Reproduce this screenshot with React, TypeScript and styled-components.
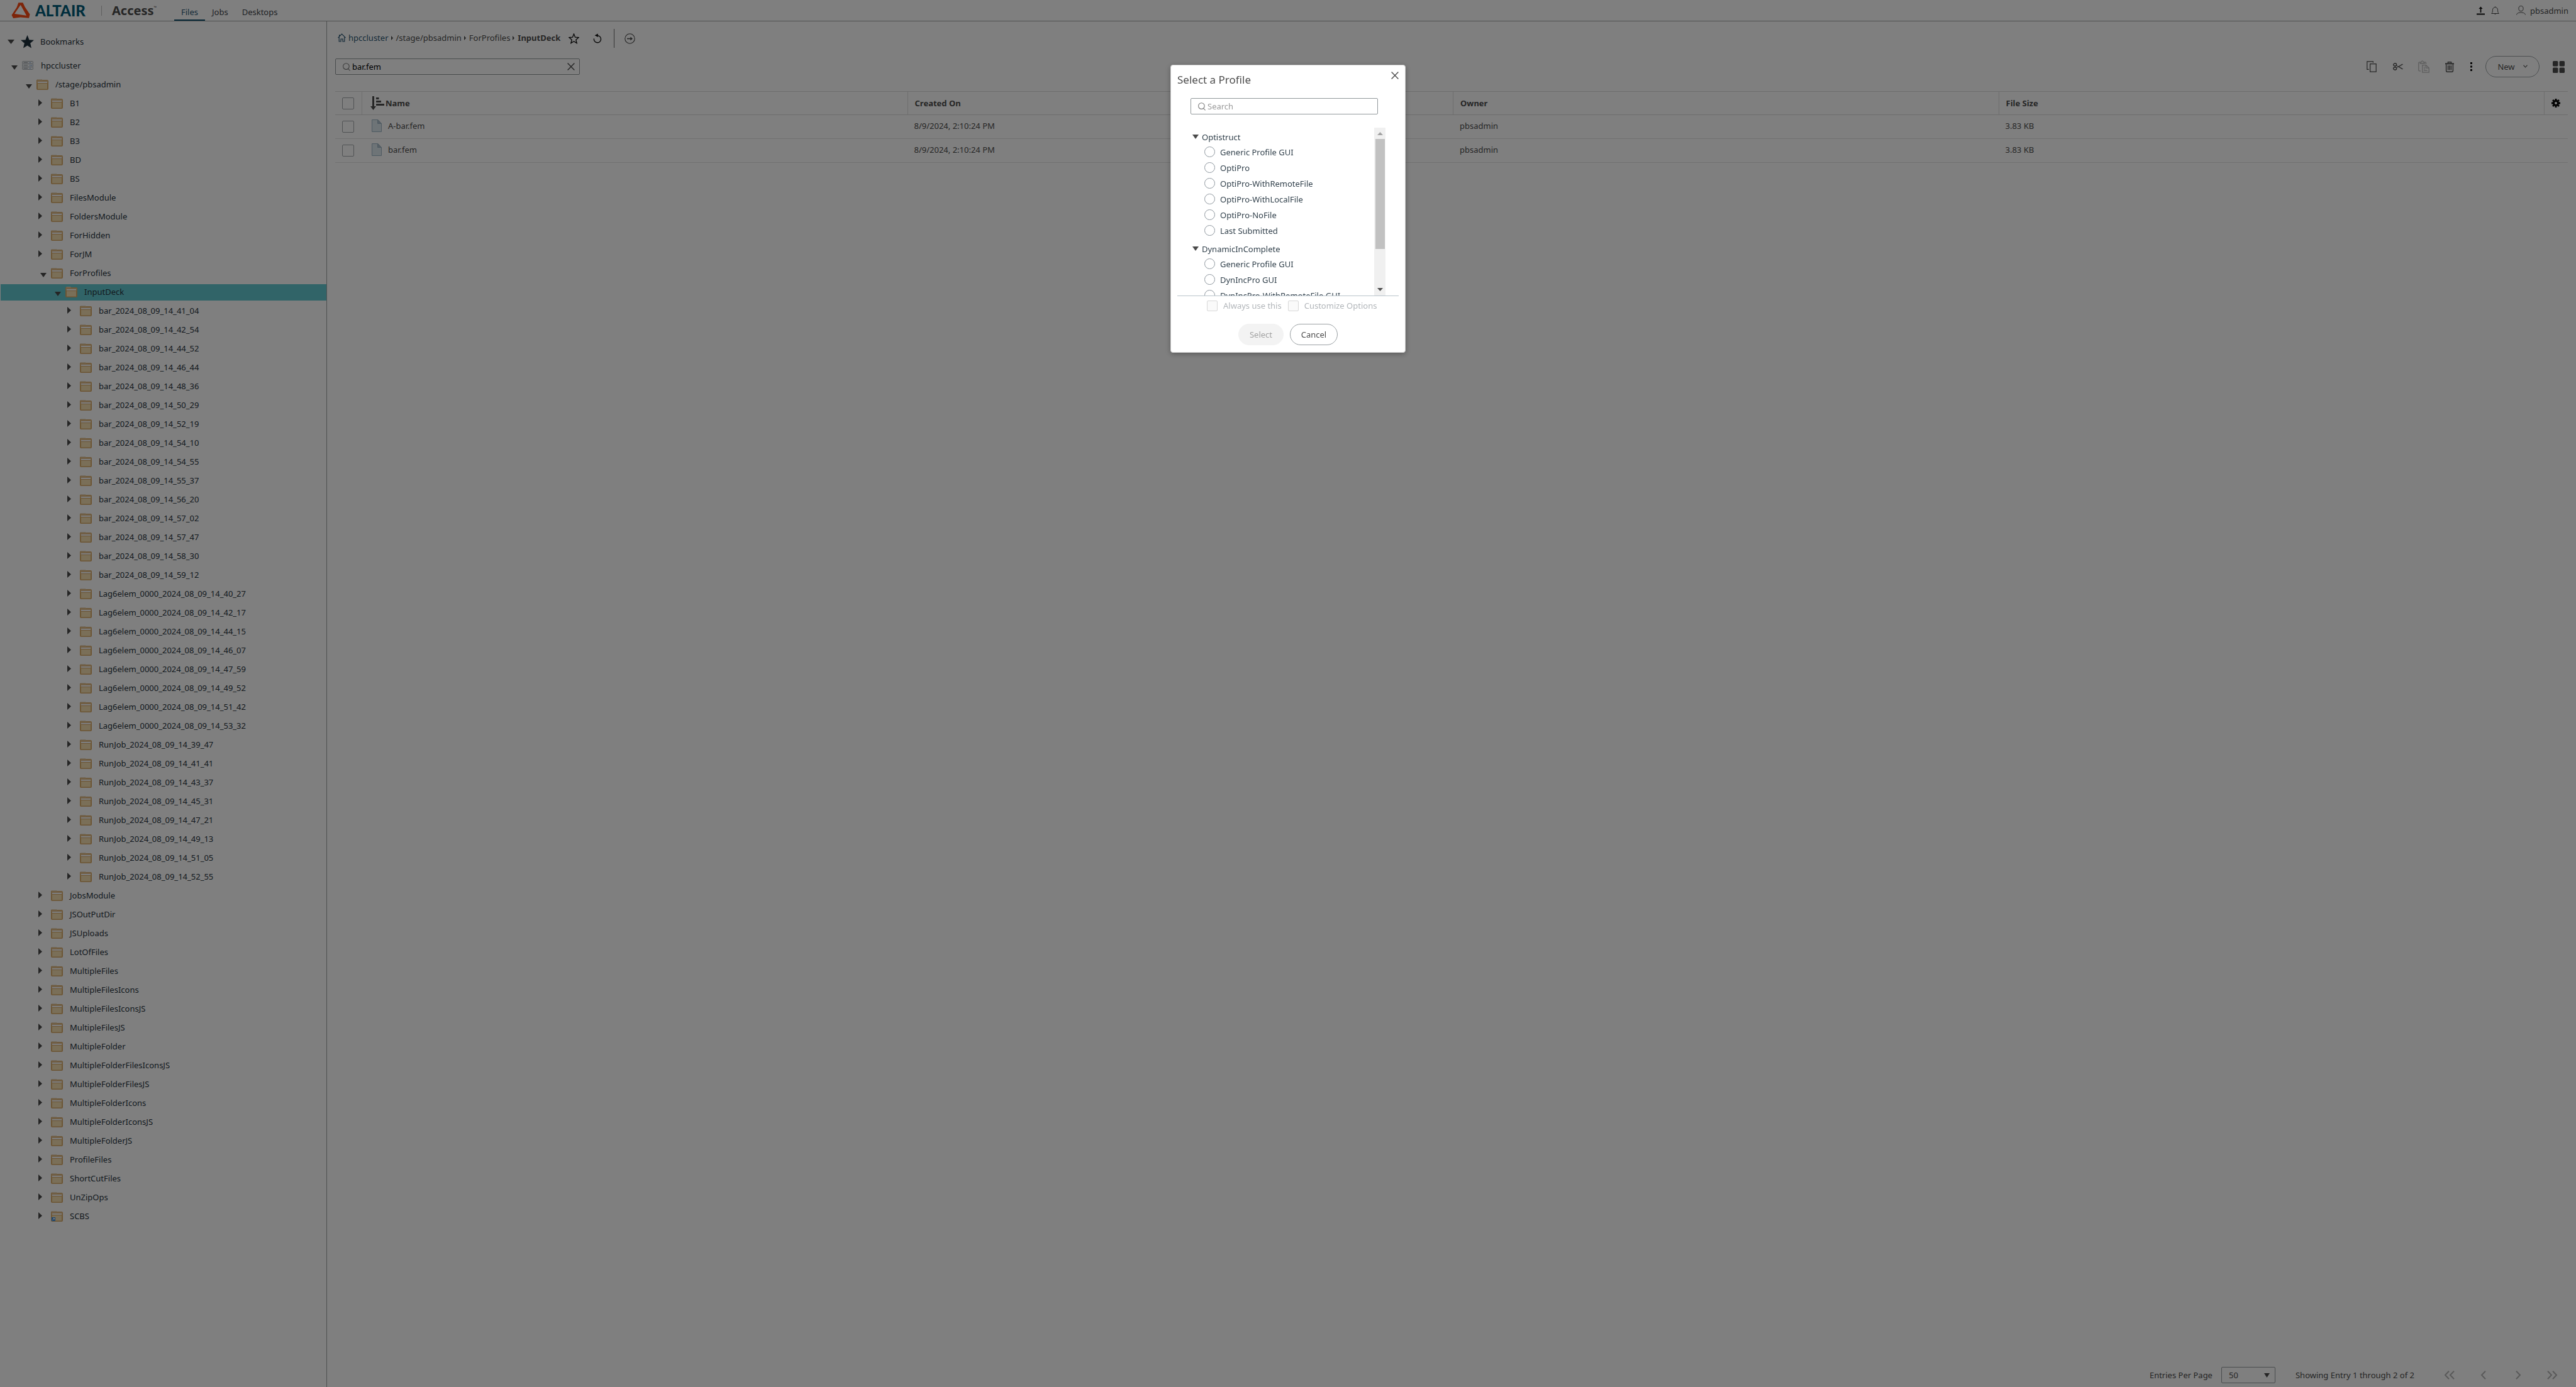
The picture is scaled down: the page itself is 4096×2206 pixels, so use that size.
import React from "react";
import styled, { createGlobalStyle, css } from "styled-components";

const GlobalStyle = createGlobalStyle`
  *, *::before, *::after { box-sizing: border-box; }
  html, body { margin: 0; padding: 0; background: #fff; }
  body {
    font-family: "Noto Sans", "Open Sans", sans-serif;
    font-size: 13px;
    line-height: 20px;
    color: #4d4d4d;
  }
  button, input, select { font: inherit; color: inherit; margin: 0; }
  button { cursor: pointer; }
  a { color: inherit; text-decoration: none; }
  ul, ol { list-style: none; margin: 0; padding: 0; }
  svg { display: block; flex: none; }
`;

/* ---------- layout ---------- */

const Page = styled.div`
  min-height: 100vh;
  display: flex;
  flex-direction: column;
`;

const Header = styled.header`
  height: 34px;
  flex: none;
  display: flex;
  align-items: stretch;
  padding: 0 12px 0 18px;
  border-bottom: 1px solid #9fa2a3;
`;

const Body = styled.div`
  flex: 1;
  display: flex;
  align-items: stretch;
`;

const Sidebar = styled.aside`
  width: 520px;
  flex: none;
  padding: 17px 0 20px 1px;
  border-right: 1px solid #9fa2a3;
  color: #27333d;
`;

const Main = styled.main`
  flex: 1;
  min-width: 0;
  display: flex;
  flex-direction: column;
  padding: 12px 13px 6px;
`;

/* ---------- header ---------- */

const Brand = styled.div`
  display: flex;
  align-items: center;
  width: 259px;
`;

const BrandName = styled.span`
  margin-left: 8px;
  width: 97px;
  font: 900 24px/32px Lato, sans-serif;
  color: #005b78;
`;

const BrandRule = styled.span`
  width: 1px;
  height: 16px;
  margin: 0 16px 0 8px;
  background: #bdbdbd;
`;

const ProductName = styled.span`
  display: flex;
  font-weight: 700;
  font-size: 20px;
  line-height: 32px;
  sup { font-size: 6px; line-height: 22px; font-weight: 400; }
`;

const Tabs = styled.nav`
  display: flex;
`;

const Tab = styled.a<{ $active?: boolean }>`
  padding: 6px 11px 0;
  line-height: 26px;
  color: ${(p) => (p.$active ? "#2b5672" : "#3c4248")};
  border-bottom: 2px solid ${(p) => (p.$active ? "#10506e" : "transparent")};
`;

const HeaderTools = styled.div`
  margin-left: auto;
  display: flex;
  align-items: center;
  gap: 10px;
`;

const IconButton = styled.button<{ $w?: number; $h?: number }>`
  display: flex;
  align-items: center;
  justify-content: center;
  flex: none;
  width: ${(p) => (p.$w ? `${p.$w}px` : "auto")};
  height: ${(p) => (p.$h ? `${p.$h}px` : "auto")};
  padding: 0;
  border: 0;
  background: none;
  color: #4d4d4d;
`;

const UserButton = styled(IconButton)`
  gap: 7px;
  margin-left: 17px;
`;

/* ---------- tree ---------- */

const BookmarkRow = styled.div`
  display: flex;
  align-items: center;
  gap: 10px;
  height: 30px;
  margin-bottom: 8px;
  padding-left: 11px;
`;

const TreeRow = styled.div<{ $depth: number; $selected?: boolean }>`
  display: flex;
  align-items: center;
  height: 30px;
  padding-left: ${(p) => p.$depth * 23 + 14}px;
  line-height: 30px;
  ${(p) =>
    p.$selected &&
    css`
      background: #62c8d0;
      box-shadow: inset 0 3px #fff, inset 0 -1px #fff;
    `}
`;

const TreeToggle = styled.button<{ $open?: boolean }>`
  width: 20px;
  height: 20px;
  flex: none;
  display: flex;
  align-items: center;
  padding: ${(p) => (p.$open ? "6px 0 0 3px" : "0 0 2px 0")};
  border: 0;
  background: none;
`;

const TreeIcon = styled.span`
  width: 20px;
  margin-right: 10px;
  flex: none;
`;

/* ---------- toolbar ---------- */

const BreadcrumbBar = styled.div`
  display: flex;
  align-items: center;
  height: 30px;
  padding-left: 4px;
`;

const Crumbs = styled.ol`
  display: flex;
  align-items: center;
  height: 30px;
  padding-bottom: 2px;
`;

const Crumb = styled.li<{ $current?: boolean }>`
  display: flex;
  align-items: center;
  gap: 4px;
  padding-right: 5px;
  font-weight: ${(p) => (p.$current ? 700 : 400)};
  &:first-child { color: #2b5672; }
`;

const Divider = styled.span`
  width: 1px;
  height: 30px;
  margin: 0 16px 0 4px;
  background: #6a6a6a;
`;

const ToolRow = styled.div`
  display: flex;
  align-items: center;
  justify-content: space-between;
  height: 34px;
  margin: 13px 0 22px;
`;

const SearchBox = styled.div<{ $w: string }>`
  display: flex;
  align-items: center;
  gap: 3px;
  width: ${(p) => p.$w};
  height: 26px;
  padding: 0 7px 0 11px;
  border: 1px solid #92989b;
  border-radius: 2px;
`;

const SearchField = styled.input`
  flex: 1;
  min-width: 0;
  padding: 0;
  border: 0;
  outline: 0;
  background: none;
  color: #000;
  &::placeholder { color: #9a9a9a; opacity: 1; }
`;

const Tools = styled.div`
  display: flex;
  align-items: center;
  padding-right: 5px;
`;

const PillButton = styled.button<{ $w: number; $filled?: boolean }>`
  display: flex;
  align-items: center;
  justify-content: center;
  gap: 13px;
  width: ${(p) => p.$w}px;
  height: 34px;
  padding: 0 0 1px;
  border: 1px solid ${(p) => (p.$filled ? "#f3f3f3" : "#9aa0a3")};
  border-radius: 17px;
  background: ${(p) => (p.$filled ? "#f3f3f3" : "#fff")};
  color: ${(p) => (p.$filled ? "#a3a3a3" : "#4d4d4d")};
`;

const NewButton = styled(PillButton)`
  margin: 0 21px 0 10px;
`;

/* ---------- table ---------- */

const Table = styled.table`
  width: 100%;
  table-layout: fixed;
  border-collapse: separate;
  border-spacing: 0;
  text-align: left;
`;

const HeadCell = styled.th<{ $w?: number }>`
  width: ${(p) => (p.$w ? `${p.$w}px` : "auto")};
  height: 38px;
  padding: 0 11px;
  border-top: 1px solid #dcdcdc;
  border-bottom: 1px solid #dcdcdc;
  font-weight: 700;
  & + & { border-left: 1px solid #dcdcdc; }
`;

const Cell = styled.td`
  height: 38px;
  padding: 0 11px 4px;
  border-bottom: 1px solid #e2e2e2;
  &:first-child { padding: 0 11px; }
`;

const CellContent = styled.div`
  display: flex;
  align-items: center;
`;

const NameContent = styled(CellContent)`
  gap: 10px;
  padding-left: 5px;
`;

const SortContent = styled(CellContent)`
  gap: 2px;
  padding-left: 2px;
`;

const CheckBox = styled.input`
  appearance: none;
  display: block;
  flex: none;
  width: 19px;
  height: 19px;
  margin: 0;
  border: 1px solid #a0a5a8;
  border-radius: 2px;
  background: #fff;
  &:disabled { width: 17px; height: 17px; border-color: #d8d8d8; background: #fafafa; }
`;

/* ---------- footer ---------- */

const Footer = styled.footer`
  margin-top: auto;
  height: 26px;
  display: flex;
  align-items: center;
  justify-content: flex-end;
  line-height: 24px;
`;

const PageSizeLabel = styled.label`
  margin-right: 14px;
`;

const SelectWrap = styled.span`
  display: flex;
  align-items: center;
  width: 86px;
  height: 26px;
  margin-right: 32px;
  padding-right: 8px;
  border: 1px solid #92989b;
  border-radius: 2px;
`;

const PageSize = styled.select`
  appearance: none;
  flex: 1;
  height: 24px;
  padding: 0 0 0 11px;
  border: 0;
  outline: 0;
  background: none;
`;

const Pager = styled.div`
  display: flex;
  margin-left: 28px;
`;

/* ---------- dialog ---------- */

const Backdrop = styled.div`
  position: fixed;
  inset: 0;
  display: flex;
  justify-content: center;
  align-items: flex-start;
  padding-top: 103px;
  background: rgba(0, 0, 0, 0.5);
`;

const Dialog = styled.div`
  width: 374px;
  padding: 0 10px 11px;
  display: flex;
  flex-direction: column;
  border: 1px solid #d0d0d0;
  border-radius: 4px;
  background: #fff;
  box-shadow: 0 2px 8px rgba(0, 0, 0, 0.3);
`;

const DialogHead = styled.div`
  display: flex;
  justify-content: space-between;
  height: 52px;
  padding-top: 8px;
`;

const DialogTitle = styled.h2`
  margin: 0;
  font-size: 17px;
  line-height: 30px;
  font-weight: 400;
`;

const DialogBody = styled.div`
  padding: 0 21px;
`;

const ProfilePane = styled.div`
  display: flex;
  height: 268px;
  margin-top: 21px;
  padding: 0 21px;
  border-bottom: 1px solid #b9c3cb;
`;

const ProfileList = styled.div`
  flex: 1;
  overflow-y: auto;
  scrollbar-width: none;
  color: #33424d;
`;

const Group = styled.section`
  padding-top: 5px;
  & + & { padding-top: 7px; }
`;

const GroupHead = styled.button`
  display: flex;
  align-items: center;
  gap: 5px;
  height: 21px;
  padding: 0 0 2px 3px;
  border: 0;
  background: none;
`;

const Option = styled.label`
  display: flex;
  align-items: center;
  gap: 8px;
  height: 25px;
  padding-left: 22px;
`;

const Radio = styled.input`
  appearance: none;
  flex: none;
  width: 17px;
  height: 17px;
  margin: 0;
  border: 1px solid #8f989f;
  border-radius: 50%;
  background: #fff;
`;

const ScrollTrack = styled.div`
  width: 18px;
  flex: none;
  display: flex;
  flex-direction: column;
  align-items: center;
  justify-content: space-between;
  padding: 7px 0;
  background: #f0f0f0;
`;

const ScrollThumb = styled.div`
  width: 15px;
  height: 175px;
  margin-bottom: 56px;
  background: #c1c1c1;
`;

const Choices = styled.div`
  display: flex;
  padding: 6px 0 0 47px;
  gap: 10px;
`;

const Choice = styled.label`
  display: flex;
  align-items: center;
  gap: 9px;
  height: 18px;
  color: #b2b6ba;
`;

const Actions = styled.div`
  display: flex;
  justify-content: center;
  gap: 10px;
  margin-top: 20px;
`;

/* ---------- icons ---------- */

const LogoMark = () => (
  <svg width="30" height="25" viewBox="34 14 102 88" aria-hidden="true">
    <path
      fill="#fb4a14"
      fillRule="evenodd"
      d="M72 15H97L108 39L136 80L131 101L84 97L43 102L34 84L63 40ZM84 27L50 77L117 87Z"
    />
  </svg>
);

const TriDown = ({ w = 10, color = "#4a4a4a" }: { w?: number; color?: string }) => (
  <svg width={w} height="7" viewBox="0 0 10 7" preserveAspectRatio="none" aria-hidden="true">
    <path d="M0 0H10L5 7Z" fill={color} />
  </svg>
);

const TriRight = ({ w = 6, h = 11 }: { w?: number; h?: number }) => (
  <svg width={w} height={h} viewBox="0 0 6 11" preserveAspectRatio="none" aria-hidden="true">
    <path d="M0 0L6 5.5L0 11Z" fill="#4a4a4a" />
  </svg>
);

const FolderIcon = ({ link }: { link?: boolean }) => (
  <svg width="19" height="17" viewBox="0 0 19 17" aria-hidden="true">
    <path d="M.5 15.5V2Q.5 .8 1.5 .8H8.5L9.5 1.6H17.5Q18.5 1.6 18.5 2.6V15.5Q18.5 16.5 17.5 16.5H1.5Q.5 16.5 .5 15.5Z" fill="#e2bf8c" stroke="#d8aa68" />
    <path d="M1.5 .5H8.5" stroke="#eadfca" />
    <path d="M2 4H17V6H2Z" fill="#fdfdfd" />
    <path d="M1.5 6.5H17.5V16H1.5Z" fill="#f5dfb0" stroke="#d8aa68" />
    {link && (
      <>
        <path d="M1 10H7V16H1Z" fill="#3f8fe0" />
        <path d="M2.5 14.5L5 12M3.5 11.5H5.5V13.5" stroke="#fff" fill="none" />
      </>
    )}
  </svg>
);

const ServerIcon = () => (
  <svg width="18" height="14" viewBox="0 0 18 14" fill="#f1f3f4" stroke="#aab2b6" aria-hidden="true">
    <rect x=".5" y=".5" width="17" height="4" rx="1" />
    <rect x=".5" y="4.5" width="17" height="5" rx="1" />
    <rect x=".5" y="9.5" width="17" height="4" rx="1" />
    <path d="M2.5 2.5H9M2.5 7H9M2.5 11.5H9" stroke="#8f979b" />
    <path d="M12 2.5H13.5M12 7H13.5M12 11.5H13.5M14.5 7H16" stroke="#5b8fd0" />
  </svg>
);

const StarIcon = ({ size, solid }: { size: number; solid?: boolean }) => (
  <svg width={size} height={size} viewBox="0 0 20 20" aria-hidden="true">
    <path
      d="M10 1.2L12.4 7.3L18.8 7.8L13.9 12L15.4 18.4L10 15L4.6 18.4L6.1 12L1.2 7.8L7.6 7.3Z"
      fill={solid ? "#1c2f3b" : "none"}
      stroke={solid ? "#1c2f3b" : "#111"}
      strokeWidth={solid ? 1 : 1.6}
    />
  </svg>
);

const HomeIcon = () => (
  <svg width="13" height="14" viewBox="0 0 13 14" fill="none" stroke="#2b5672" strokeWidth="1.2" aria-hidden="true">
    <path d="M.5 7.2L6.5 1L12.5 7.2M2.2 6V13H5V9H8V13H10.8V6M2.6 4.6V2" />
  </svg>
);

const RefreshIcon = () => (
  <svg width="14" height="16" viewBox="0 0 14 16" aria-hidden="true">
    <path d="M7 3.6A5.6 5.6 0 1 1 1.4 8.4" fill="none" stroke="#111" strokeWidth="1.4" />
    <path d="M2.6 3.2L7.8 .4V6Z" fill="#111" />
  </svg>
);

const GoIcon = () => (
  <svg width="17" height="17" viewBox="0 0 17 17" fill="none" stroke="#4d4d4d" aria-hidden="true">
    <circle cx="8.5" cy="8.5" r="7.7" strokeWidth="1.1" />
    <path d="M4 8.5H10.5" strokeWidth="1.6" />
    <path d="M9.4 5.6L13 8.5L9.4 11.4Z" fill="#4d4d4d" stroke="none" />
  </svg>
);

const SearchIcon = () => (
  <svg width="12" height="13" viewBox="0 0 12 13" fill="none" stroke="#7a7a7a" strokeWidth="1.1" aria-hidden="true">
    <circle cx="5.4" cy="5.6" r="4.8" />
    <path d="M8.2 9.2L11.6 12.4" />
  </svg>
);

const CloseIcon = () => (
  <svg width="12" height="12" viewBox="0 0 12 12" stroke="#4d4d4d" strokeWidth="1.4" aria-hidden="true">
    <path d="M.6 .6L11.4 11.4M11.4 .6L.6 11.4" />
  </svg>
);

const UploadIcon = () => (
  <svg width="13" height="14" viewBox="0 0 13 14" fill="#111" aria-hidden="true">
    <path d="M0 11.5H13V13.5H0ZM5.6 10V4H3.4L6.5 .4L9.6 4H7.4V10Z" />
  </svg>
);

const BellIcon = () => (
  <svg width="13" height="14" viewBox="0 0 13 14" fill="none" stroke="#4d4d4d" aria-hidden="true">
    <path d="M.7 11.5C2.2 10 2.3 8.8 2.4 6.2C2.5 3.3 4 1.6 6.5 1.6S10.5 3.3 10.6 6.2C10.7 8.8 10.8 10 12.3 11.5ZM5.8 11.8L6.5 13L7.2 11.8M6.5 1.4V.3" />
  </svg>
);

const UserIcon = () => (
  <svg width="15" height="15" viewBox="0 0 15 15" fill="none" stroke="#4d4d4d" aria-hidden="true">
    <ellipse cx="7.5" cy="4.6" rx="3.6" ry="4.1" />
    <path d="M.6 14.5C.8 12 3.8 10.9 7.5 10.9S14.2 12 14.4 14.5" />
  </svg>
);

const CopyIcon = () => (
  <svg width="16" height="18" viewBox="0 0 16 18" fill="none" stroke="#4d4d4d" strokeWidth="1.2" aria-hidden="true">
    <path d="M3.6 13.4H.8V.8H10.4V2.8M5.6 4.6H15.2V17.2H5.6Z" />
  </svg>
);

const CutIcon = () => (
  <svg width="16" height="12" viewBox="0 0 16 12" fill="none" stroke="#4d4d4d" aria-hidden="true">
    <ellipse cx="3.2" cy="2.9" rx="2.5" ry="2.1" strokeWidth="1.4" />
    <ellipse cx="3.2" cy="9.1" rx="2.5" ry="2.1" strokeWidth="1.4" />
    <path d="M5.4 4L14 9.6Q15.6 10.4 15.4 9.4L8.4 5.6M5.4 8L14 2.4Q15.6 1.6 15.4 2.6L8.4 6.4" strokeWidth=".9" />
  </svg>
);

const PasteIcon = () => (
  <svg width="18" height="20" viewBox="0 0 18 20" fill="none" stroke="#bcbcbc" strokeWidth="1.3" aria-hidden="true">
    <path d="M4 16.8H2Q.8 16.8 .8 15.6V4Q.8 2.8 2 2.8H3.4M10 2.8H11.2Q12.4 2.8 12.4 4V6M3.4 5V2.8H5Q5.2 .8 6.7 .8T8.4 2.8H10V5Z" />
    <path d="M6.8 7.6H12.6L17.2 12V19.2H6.8ZM12.4 7.8V12.2H17M9 11H10.6M9 13.6H11M9 16.2H14.6" />
  </svg>
);

const TrashIcon = () => (
  <svg width="14" height="17" viewBox="0 0 14 17" fill="none" stroke="#4d4d4d" strokeWidth="1.4" aria-hidden="true">
    <path d="M4.4 2.6V.8H9.6V2.6" />
    <path d="M0 3.4H14" strokeWidth="2" />
    <path d="M1.6 4.4V14.4Q1.6 16.2 3.2 16.2H10.8Q12.4 16.2 12.4 14.4V4.4M4.6 6V13.6M7 6V13.6M9.4 6V13.6" />
  </svg>
);

const DotsIcon = () => (
  <svg width="3" height="14" viewBox="0 0 3 14" fill="#111" aria-hidden="true">
    <path d="M0 0H3V3H0ZM0 5.5H3V8.5H0ZM0 11H3V14H0Z" />
  </svg>
);

const GridIcon = () => (
  <svg width="19" height="19" viewBox="0 0 19 19" fill="#4d4d4d" aria-hidden="true">
    <rect width="8.4" height="8.4" rx="1.6" />
    <rect x="10.6" width="8.4" height="8.4" rx="1.6" />
    <rect y="10.6" width="8.4" height="8.4" rx="1.6" />
    <rect x="10.6" y="10.6" width="8.4" height="8.4" rx="1.6" />
  </svg>
);

const GearIcon = () => (
  <svg width="14" height="14" viewBox="0 0 14 14" aria-hidden="true">
    <circle cx="7" cy="7" r="3.5" fill="none" stroke="#050505" strokeWidth="3" />
    {[0, 45, 90, 135].map((a) => (
      <path key={a} d="M5.6 0H8.4V2.8H5.6ZM5.6 11.2H8.4V14H5.6Z" fill="#050505" transform={`rotate(${a} 7 7)`} />
    ))}
  </svg>
);

const SortIcon = () => (
  <svg width="22" height="22" viewBox="0 0 22 22" fill="#4d4d4d" aria-hidden="true">
    <path d="M3 0H6V16H9L4.5 22L0 16H3ZM9 2H13.5V5H9ZM9 7H17V10H9ZM9 12H22V15H9Z" />
  </svg>
);

const FileIcon = () => (
  <svg width="16" height="20" viewBox="0 0 16 20" aria-hidden="true">
    <path d="M.5 .5H10L15.5 6.5V19.5H.5Z" fill="#dde8ef" stroke="#9db4c4" />
    <path d="M9.5 .5L15.5 6.5H9.5Z" fill="#aebfcb" stroke="#9db4c4" />
  </svg>
);

const ChevronDown = () => (
  <svg width="7" height="5" viewBox="0 0 7 5" fill="none" stroke="#4d4d4d" strokeWidth="1.1" aria-hidden="true">
    <path d="M.5 .7L3.5 4L6.5 .7" />
  </svg>
);

const PageArrow = ({ dir, double }: { dir: "left" | "right"; double?: boolean }) => (
  <svg width={double ? 17 : 9} height="14" viewBox={double ? "0 0 17 14" : "0 0 9 14"} fill="none" stroke="#b4b4b4" strokeWidth="2" aria-hidden="true">
    {dir === "left" ? (
      <path d={double ? "M8 .8L2 7L8 13.2M16 .8L10 7L16 13.2" : "M8 .8L2 7L8 13.2"} />
    ) : (
      <path d={double ? "M1 .8L7 7L1 13.2M9 .8L15 7L9 13.2" : "M1 .8L7 7L1 13.2"} />
    )}
  </svg>
);

const ScrollArrow = ({ up }: { up?: boolean }) => (
  <svg width="9" height="5" viewBox="0 0 9 5" aria-hidden="true">
    <path d={up ? "M0 5L4.5 0L9 5Z" : "M0 0L4.5 5L9 0Z"} fill={up ? "#a3a3a3" : "#505050"} />
  </svg>
);

/* ---------- data ---------- */

type Node = { name: string; depth: number; open?: boolean; selected?: boolean; server?: boolean; link?: boolean };

const at = (depth: number, names: string[]): Node[] => names.map((name) => ({ name, depth }));

const stamped = (prefix: string, times: string[]) => times.map((t) => `${prefix}_2024_08_09_14_${t}`);

const tree: Node[] = [
  { name: "hpccluster", depth: 0, open: true, server: true },
  { name: "/stage/pbsadmin", depth: 1, open: true },
  ...at(2, ["B1", "B2", "B3", "BD", "BS", "FilesModule", "FoldersModule", "ForHidden", "ForJM"]),
  { name: "ForProfiles", depth: 2, open: true },
  { name: "InputDeck", depth: 3, open: true, selected: true },
  ...at(4, [
    ...stamped("bar", [
      "41_04", "42_54", "44_52", "46_44", "48_36", "50_29", "52_19", "54_10",
      "54_55", "55_37", "56_20", "57_02", "57_47", "58_30", "59_12",
    ]),
    ...stamped("Lag6elem_0000", ["40_27", "42_17", "44_15", "46_07", "47_59", "49_52", "51_42", "53_32"]),
    ...stamped("RunJob", ["39_47", "41_41", "43_37", "45_31", "47_21", "49_13", "51_05", "52_55"]),
  ]),
  ...at(2, [
    "JobsModule", "JSOutPutDir", "JSUploads", "LotOfFiles", "MultipleFiles", "MultipleFilesIcons",
    "MultipleFilesIconsJS", "MultipleFilesJS", "MultipleFolder", "MultipleFolderFilesIconsJS",
    "MultipleFolderFilesJS", "MultipleFolderIcons", "MultipleFolderIconsJS", "MultipleFolderJS",
    "ProfileFiles", "ShortCutFiles", "UnZipOps",
  ]),
  { name: "SCBS", depth: 2, link: true },
];

const files = [
  { name: "A-bar.fem", created: "8/9/2024, 2:10:24 PM", owner: "pbsadmin", size: "3.83 KB" },
  { name: "bar.fem", created: "8/9/2024, 2:10:24 PM", owner: "pbsadmin", size: "3.83 KB" },
];

const profiles = [
  {
    name: "Optistruct",
    options: ["Generic Profile GUI", "OptiPro", "OptiPro-WithRemoteFile", "OptiPro-WithLocalFile", "OptiPro-NoFile", "Last Submitted"],
  },
  { name: "DynamicInComplete", options: ["Generic Profile GUI", "DynIncPro GUI", "DynIncPro-WithRemoteFile GUI"] },
];

/* ---------- page ---------- */

const FileTree = () => (
  <Sidebar>
    <BookmarkRow>
      <TriDown w={11} />
      <StarIcon size={21} solid />
      <span>Bookmarks</span>
    </BookmarkRow>
    <ul>
      {tree.map((n, i) => (
        <li key={i}>
          <TreeRow $depth={n.depth} $selected={n.selected}>
            <TreeToggle $open={n.open} aria-label={n.name} aria-expanded={!!n.open}>
              {n.open ? <TriDown /> : <TriRight />}
            </TreeToggle>
            <TreeIcon>{n.server ? <ServerIcon /> : <FolderIcon link={n.link} />}</TreeIcon>
            {n.name}
          </TreeRow>
        </li>
      ))}
    </ul>
  </Sidebar>
);

const ProfileDialog = () => (
  <Backdrop>
    <Dialog role="dialog" aria-labelledby="dialog-title">
      <DialogHead>
        <DialogTitle id="dialog-title">Select a Profile</DialogTitle>
        <IconButton $w={12} $h={16} aria-label="Close">
          <CloseIcon />
        </IconButton>
      </DialogHead>
      <DialogBody>
        <SearchBox $w="298px">
          <SearchIcon />
          <SearchField placeholder="Search" aria-label="Search profiles" />
        </SearchBox>
      </DialogBody>
      <ProfilePane>
        <ProfileList>
          {profiles.map((g) => (
            <Group key={g.name}>
              <GroupHead>
                <TriDown />
                {g.name}
              </GroupHead>
              {g.options.map((o) => (
                <Option key={o}>
                  <Radio type="radio" name="profile" />
                  {o}
                </Option>
              ))}
            </Group>
          ))}
        </ProfileList>
        <ScrollTrack>
          <ScrollArrow up />
          <ScrollThumb />
          <ScrollArrow />
        </ScrollTrack>
      </ProfilePane>
      <Choices>
        <Choice>
          <CheckBox type="checkbox" disabled />
          Always use this
        </Choice>
        <Choice>
          <CheckBox type="checkbox" disabled />
          Customize Options
        </Choice>
      </Choices>
      <Actions>
        <PillButton $w={72} $filled disabled>
          Select
        </PillButton>
        <PillButton $w={76}>Cancel</PillButton>
      </Actions>
    </Dialog>
  </Backdrop>
);

export default function App() {
  return (
    <>
      <GlobalStyle />
      <Page>
        <Header>
          <Brand>
            <LogoMark />
            <BrandName>ALTAIR</BrandName>
            <BrandRule />
            <ProductName>
              Access<sup>™</sup>
            </ProductName>
          </Brand>
          <Tabs>
            <Tab href="#files" $active>Files</Tab>
            <Tab href="#jobs">Jobs</Tab>
            <Tab href="#desktops">Desktops</Tab>
          </Tabs>
          <HeaderTools>
            <IconButton aria-label="Upload"><UploadIcon /></IconButton>
            <IconButton aria-label="Notifications"><BellIcon /></IconButton>
            <UserButton>
              <UserIcon />
              pbsadmin
            </UserButton>
          </HeaderTools>
        </Header>
        <Body>
          <FileTree />
          <Main>
            <BreadcrumbBar>
              <Crumbs>
                <Crumb><HomeIcon /><a href="#hpccluster">hpccluster</a><TriRight w={3} h={7} /></Crumb>
                <Crumb><a href="#stage">/stage/pbsadmin</a><TriRight w={3} h={7} /></Crumb>
                <Crumb><a href="#profiles">ForProfiles</a><TriRight w={3} h={7} /></Crumb>
                <Crumb $current><span>InputDeck</span></Crumb>
              </Crumbs>
              <IconButton $w={32} $h={30} aria-label="Bookmark"><StarIcon size={17} /></IconButton>
              <IconButton $w={44} $h={30} aria-label="Refresh"><RefreshIcon /></IconButton>
              <Divider />
              <IconButton $w={17} $h={30} aria-label="Go to"><GoIcon /></IconButton>
            </BreadcrumbBar>
            <ToolRow>
              <SearchBox $w="389px">
                <SearchIcon />
                <SearchField defaultValue="bar.fem" aria-label="Search files" />
                <IconButton aria-label="Clear search"><CloseIcon /></IconButton>
              </SearchBox>
              <Tools>
                <IconButton $w={42} $h={34} aria-label="Copy"><CopyIcon /></IconButton>
                <IconButton $w={42} $h={34} aria-label="Cut"><CutIcon /></IconButton>
                <IconButton $w={40} $h={34} aria-label="Paste" disabled><PasteIcon /></IconButton>
                <IconButton $w={42} $h={34} aria-label="Delete"><TrashIcon /></IconButton>
                <IconButton $w={26} $h={34} aria-label="More"><DotsIcon /></IconButton>
                <NewButton $w={86}>New<ChevronDown /></NewButton>
                <IconButton aria-label="Grid view"><GridIcon /></IconButton>
              </Tools>
            </ToolRow>
            <Table>
              <thead>
                <tr>
                  <HeadCell $w={42}><CheckBox type="checkbox" aria-label="Select all" /></HeadCell>
                  <HeadCell><SortContent><SortIcon />Name</SortContent></HeadCell>
                  <HeadCell>Created On</HeadCell>
                  <HeadCell>Owner</HeadCell>
                  <HeadCell>File Size</HeadCell>
                  <HeadCell $w={38}><IconButton aria-label="Columns"><GearIcon /></IconButton></HeadCell>
                </tr>
              </thead>
              <tbody>
                {files.map((f) => (
                  <tr key={f.name}>
                    <Cell><CheckBox type="checkbox" aria-label={`Select ${f.name}`} /></Cell>
                    <Cell><NameContent><FileIcon />{f.name}</NameContent></Cell>
                    <Cell>{f.created}</Cell>
                    <Cell>{f.owner}</Cell>
                    <Cell>{f.size}</Cell>
                    <Cell />
                  </tr>
                ))}
              </tbody>
            </Table>
            <Footer>
              <PageSizeLabel htmlFor="page-size">Entries Per Page</PageSizeLabel>
              <SelectWrap>
                <PageSize id="page-size" defaultValue="50">
                  <option>50</option>
                </PageSize>
                <TriDown w={9} />
              </SelectWrap>
              <span>Showing Entry 1 through 2 of 2</span>
              <Pager>
                <IconButton $w={54} $h={24} aria-label="First page"><PageArrow dir="left" double /></IconButton>
                <IconButton $w={54} $h={24} aria-label="Previous page"><PageArrow dir="left" /></IconButton>
                <IconButton $w={58} $h={24} aria-label="Next page"><PageArrow dir="right" /></IconButton>
                <IconButton $w={50} $h={24} aria-label="Last page"><PageArrow dir="right" double /></IconButton>
              </Pager>
            </Footer>
          </Main>
        </Body>
      </Page>
      <ProfileDialog />
    </>
  );
}
